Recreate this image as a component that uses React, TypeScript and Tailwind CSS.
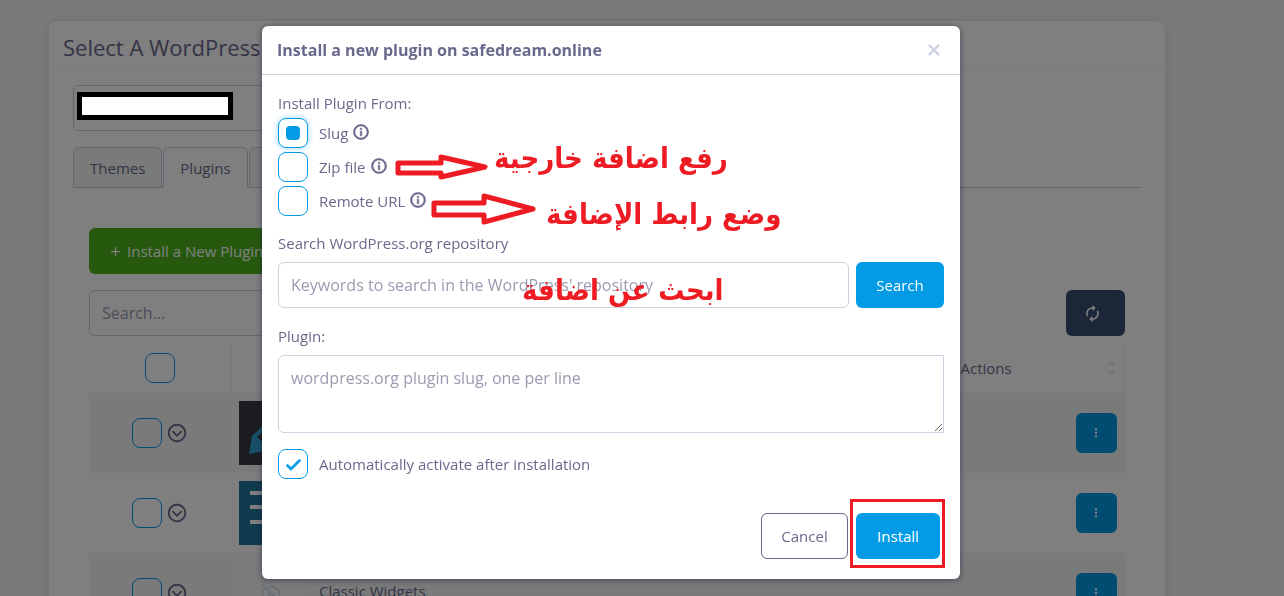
import type { ReactNode } from "react";
import {
	BiCheck,
	BiChevronDown,
	BiChevronDownCircle,
	BiChevronUp,
	BiDotsVerticalRounded,
	BiInfoCircle,
	BiPlus,
	BiX,
} from "react-icons/bi";
import { MdAutorenew } from "react-icons/md";
import { CameraOff } from "lucide-react";

const boxClass =
	"grid size-[30px] shrink-0 appearance-none place-content-center rounded-lg border border-[#039be5]";

function FeatherThumb() {
	return (
		<svg className="block size-16" viewBox="0 0 64 64" aria-hidden="true">
			<rect width="64" height="64" fill="#36393e" />
			<path d="M10 53 13 35 27 22 44 38 32 49Z" fill="#2ea3cf" />
			<path d="M18 36 24 30 32 38 26 44Z" fill="#36393e" />
		</svg>
	);
}

function LinesThumb() {
	return (
		<svg className="block size-16" viewBox="0 0 64 64" aria-hidden="true">
			<rect width="64" height="64" fill="#21759b" />
			<path d="M11 12h42M11 26h42M11 41h42" stroke="#fff" strokeWidth="4" />
		</svg>
	);
}

function EmptyThumb() {
	return (
		<div className="flex size-16 items-center justify-center bg-[#f5f7f7] text-[#cbd2e0]">
			<CameraOff size={20} strokeWidth={1.5} />
		</div>
	);
}

const plugins = [
	{ name: "Classic Editor", thumb: <FeatherThumb /> },
	{ name: "Akismet", thumb: <LinesThumb /> },
	{ name: "Classic Widgets", thumb: <EmptyThumb /> },
];

function PluginTable() {
	return (
		<table className="mt-[7px] w-full table-fixed border-collapse text-left">
			<thead>
				<tr className="h-[50px]">
					<th className="w-[142px] border-r border-[#f0f2f5]">
						<input
							type="checkbox"
							aria-label="Select all plugins"
							className={`${boxClass} mx-auto block`}
						/>
					</th>
					<th className="w-20" aria-label="Screenshot" />
					<th className="px-2 font-medium">Name</th>
					<th className="w-[172px] border-r border-[#f0f2f5] pr-1.5 pl-2 font-medium">
						<div className="flex items-center justify-between">
							Actions
							<span className="flex flex-col text-[#dcdee4]">
								<BiChevronUp size={13} strokeWidth={1} className="-mb-1" />
								<BiChevronDown size={13} strokeWidth={1} />
							</span>
						</div>
					</th>
				</tr>
			</thead>
			<tbody>
				{plugins.map((plugin) => (
					<tr key={plugin.name} className="h-20 odd:bg-[#f2f6f4]">
						<td>
							<div className="flex items-center justify-center gap-1">
								<input
									type="checkbox"
									aria-label={`Select ${plugin.name}`}
									className={boxClass}
								/>
								<button type="button" aria-label="Show details">
									<BiChevronDownCircle size={22} />
								</button>
							</div>
						</td>
						<td className="px-2">{plugin.thumb}</td>
						<td className="px-2 pb-1">{plugin.name}</td>
						<td className="px-2">
							<button
								type="button"
								aria-label={`Actions for ${plugin.name}`}
								className="ml-auto flex h-10 w-[41px] items-center justify-center rounded-md bg-[#039be5] text-white"
							>
								<BiDotsVerticalRounded size={14} />
							</button>
						</td>
					</tr>
				))}
			</tbody>
		</table>
	);
}

function PluginsPage() {
	return (
		<main className="pt-[21px] pr-[119px] pl-[49px]">
			<section className="rounded-lg bg-white pb-6 shadow-[0_0_10px_rgba(90,90,120,0.15)]">
				<h1 className="border-b border-[#f3f4f6] px-3.5 pt-3 pb-[9px] text-[22px] leading-7 font-medium">
					Select A WordPress
				</h1>
				<div className="px-6 pt-3.5">
					<div className="relative h-[46px] w-1/2 rounded-md border border-[#cbcbe0]">
						<div className="absolute top-1.5 left-[3px] z-20 h-7 w-39 border-[5px] border-black bg-white" />
					</div>
					<div role="tablist" className="mt-4 flex gap-px border-b border-[#cbcbe0]">
						<button
							type="button"
							role="tab"
							className="h-10 rounded-t-md border border-b-0 border-[#cbcbe0] bg-[#f2f6f4] px-4"
						>
							Themes
						</button>
						<button
							type="button"
							role="tab"
							aria-selected="true"
							className="-mb-px h-[41px] rounded-t-md border border-b-0 border-[#cbcbe0] bg-white px-4 font-medium"
						>
							Plugins
						</button>
						<button
							type="button"
							role="tab"
							className="h-10 rounded-t-md border border-b-0 border-[#cbcbe0] bg-[#f2f6f4] px-4"
						>
							Sets
						</button>
					</div>
					<div className="px-4 pt-10">
						<button
							type="button"
							className="flex h-[46px] items-center gap-1 rounded-md bg-[#4cb31d] px-[19px] font-medium text-white"
						>
							<BiPlus size={15} />
							Install a New Plugin
						</button>
						<div className="mt-4 flex justify-between">
							<input
								type="text"
								aria-label="Search plugins"
								placeholder="Search..."
								className="h-[46px] w-80 rounded-md border border-[#cbcbe0] px-3 text-base placeholder:text-[#9a9bb0]"
							/>
							<button
								type="button"
								aria-label="Refresh"
								className="flex h-[46px] w-[59px] items-center rounded-md bg-[#394c73] pl-[17px] text-white"
							>
								<MdAutorenew size={19} />
							</button>
						</div>
						<PluginTable />
					</div>
				</div>
			</section>
		</main>
	);
}

function SourceOption({ label, checked }: { label: string; checked?: boolean }) {
	return (
		<div className="flex h-[30px] items-center">
			<label className="flex items-center gap-[11px]">
				<input
					type="radio"
					name="source"
					defaultChecked={checked}
					className={`${boxClass} bg-white before:size-3.5 before:rounded before:bg-[#039be5] before:opacity-0 checked:shadow-[0_0_6px_rgba(3,155,229,0.4)] checked:before:opacity-100`}
				/>
				{label}
			</label>
			<BiInfoCircle size={18} strokeWidth={0.8} className="mb-0.5 ml-1" />
		</div>
	);
}

function Note({ className, children }: { className: string; children: ReactNode }) {
	return (
		<p
			lang="ar"
			dir="rtl"
			className={`pointer-events-none absolute font-['DejaVu_Sans_Condensed','DejaVu_Sans',sans-serif] text-[29px] leading-10 font-bold whitespace-nowrap text-[#ed1c24] ${className}`}
		>
			{children}
		</p>
	);
}

function InstallDialog() {
	return (
		<div className="fixed inset-0 z-10 flex items-start justify-center bg-black/50 pt-[26px] pr-[62px]">
			<div
				role="dialog"
				aria-labelledby="dialog-title"
				className="relative w-full max-w-[698px] rounded-md bg-white shadow-[0_1px_6px_rgba(30,30,60,0.6)]"
			>
				<header className="flex h-[49px] items-center justify-between border-b border-[#cbd2e0] pr-3.5 pl-[15px]">
					<h2 id="dialog-title" className="text-base font-bold">
						Install a new plugin on safedream.online
					</h2>
					<button type="button" aria-label="Close" className="text-[#cbd2e0]">
						<BiX size={24} strokeWidth={0.5} />
					</button>
				</header>
				<form className="px-4 pt-[19px] pb-4">
					<fieldset className="flex flex-col gap-1">
						<legend className="mb-1.5 leading-[18px]">Install Plugin From:</legend>
						<SourceOption label="Slug" checked />
						<SourceOption label="Zip file" />
						<SourceOption label="Remote URL" />
					</fieldset>
					<label htmlFor="keywords" className="mt-[15px] block leading-6">
						Search WordPress.org repository
					</label>
					<div className="mt-[7px] flex gap-[7px]">
						<input
							id="keywords"
							type="text"
							placeholder="Keywords to search in the WordPress' repository"
							className="h-[46px] grow rounded-md border border-[#cbd2e0] px-3 text-base placeholder:text-[#9a9bb0]"
						/>
						<button
							type="button"
							className="h-[46px] w-22 rounded-md bg-[#039be5] font-medium text-white"
						>
							Search
						</button>
					</div>
					<label htmlFor="slugs" className="mt-4 block leading-6">
						Plugin:
					</label>
					<textarea
						id="slugs"
						placeholder="wordpress.org plugin slug, one per line"
						className="mt-[7px] block h-[78px] w-full rounded-l-md border border-[#cbd2e0] px-3 py-2.5 text-base placeholder:text-[#9a9bb0]"
					/>
					<label className="relative mt-4 flex w-fit items-center gap-[11px]">
						<input type="checkbox" defaultChecked className={`${boxClass} peer`} />
						<BiCheck
							size={24}
							strokeWidth={1}
							className="pointer-events-none absolute left-[3px] text-[#039be5] opacity-0 peer-checked:opacity-100"
						/>
						Automatically activate after installation
					</label>
					<footer className="mt-[34px] mb-1 flex justify-end gap-2 pr-1 font-medium">
						<button
							type="button"
							className="h-[46px] w-[87px] rounded-md border border-[#69698c]"
						>
							Cancel
						</button>
						<button
							type="button"
							className="relative h-[46px] w-21 rounded-md bg-[#039be5] text-white"
						>
							Install
							<span className="absolute -top-3.5 -right-[5px] -bottom-[9px] -left-1.5 border-[3px] border-[#ed1c24]" />
						</button>
					</footer>
				</form>

				<svg
					className="pointer-events-none absolute top-[127px] left-[131px] h-[76px] w-[146px]"
					viewBox="0 0 146 76"
					fill="none"
					stroke="#ed1c24"
					strokeWidth="5"
					strokeLinejoin="round"
					aria-hidden="true"
				>
					<path d="M5 10H48V4L92 14 48 24V20H5Z" />
					<path d="M41 50H91V43L140 56 91 69V62H41Z" />
				</svg>
				<Note className="top-[112px] left-[232px]">رفع اضافة خارجية</Note>
				<Note className="top-[168px] left-[284px]">وضع رابط الإضافة</Note>
				<Note className="top-[244px] left-[260px]">ابحث عن اضافة</Note>
			</div>
		</div>
	);
}

function App() {
	return (
		<div className="h-screen overflow-hidden bg-[#f2f6f4] font-['Open_Sans',sans-serif] text-[15px] leading-6 text-[#69698c]">
			<PluginsPage />
			<InstallDialog />
		</div>
	);
}

export default App;
